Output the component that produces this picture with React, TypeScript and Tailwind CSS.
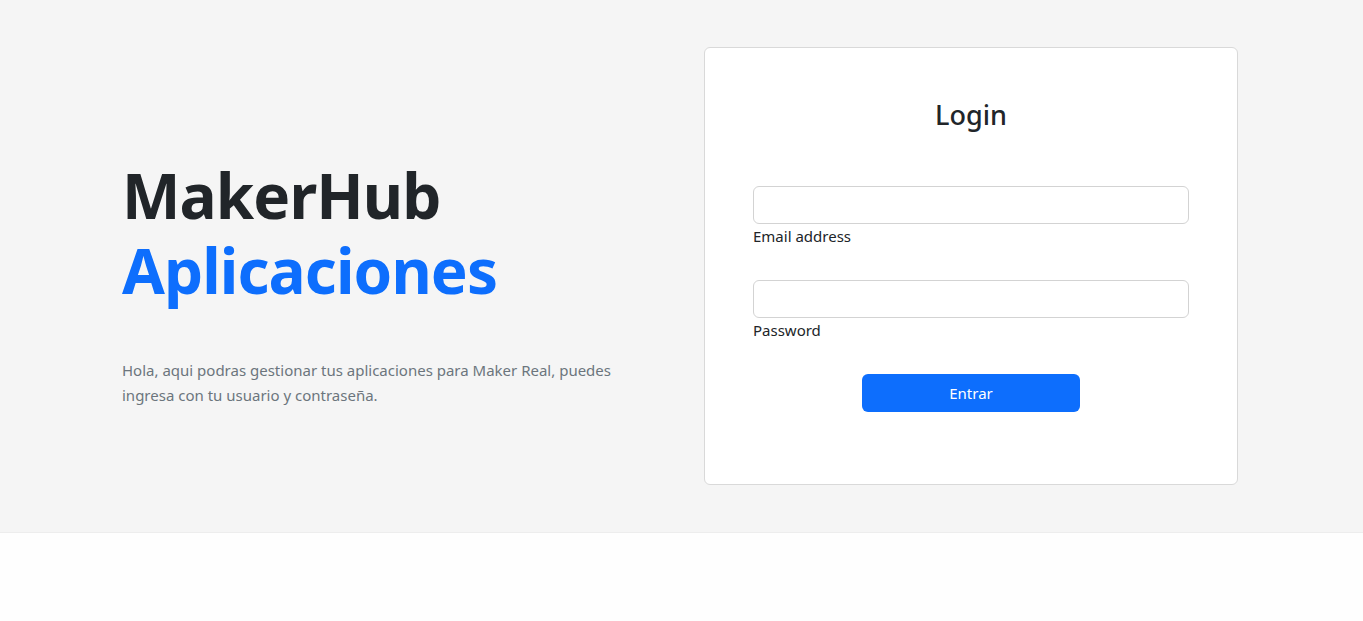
import React from 'react';

export default function App() {
  const [email, setEmail] = React.useState('');
  const [password, setPassword] = React.useState('');

  return (
    <div className="min-h-screen bg-[#fefefe] font-['Noto_Sans',sans-serif] text-[#212529]">
      <section className="bg-[#f5f5f5] border-b border-[#ededed] py-[47px] pl-[122px]">
        <div className="w-[1116px] flex items-center">
          <div className="w-[582px] pr-[48px] pt-[34px]">
            <h1 className="text-[62px] font-bold leading-[75px] tracking-[-0.9px]">
              MakerHub
              <br />
              <span className="text-[#0d6efd]">Aplicaciones</span>
            </h1>
            <p className="mt-[50px] text-[15px] leading-[25px] text-[#6c757d]">
              Hola, aqui podras gestionar tus aplicaciones para Maker Real, puedes ingresa con tu usuario y contraseña.
            </p>
          </div>

          <form
            className="w-[534px] h-[438px] bg-white border border-[#d9d9d9] rounded-[6px] p-[48px]"
            onSubmit={(e) => e.preventDefault()}
          >
            <h3 className="text-center text-[27px] font-medium leading-[34px] pt-[2px]">Login</h3>

            <div className="mt-[54px]">
              <input
                type="email"
                value={email}
                onChange={(e) => setEmail(e.target.value)}
                className="block w-full h-[38px] rounded-[6px] border border-[#d3d3d3] bg-white px-3 outline-none"
              />
              <label className="block text-[15px] leading-[24px]">Email address</label>
            </div>

            <div className="mt-[32px]">
              <input
                type="password"
                value={password}
                onChange={(e) => setPassword(e.target.value)}
                className="block w-full h-[38px] rounded-[6px] border border-[#d3d3d3] bg-white px-3 outline-none"
              />
              <label className="block text-[15px] leading-[24px]">Password</label>
            </div>

            <div className="mt-[32px] flex justify-center">
              <button
                type="submit"
                className="w-[218px] h-[38px] rounded-[6px] bg-[#0d6efd] text-white text-[15px]"
              >
                Entrar
              </button>
            </div>
          </form>
        </div>
      </section>
    </div>
  );
}
